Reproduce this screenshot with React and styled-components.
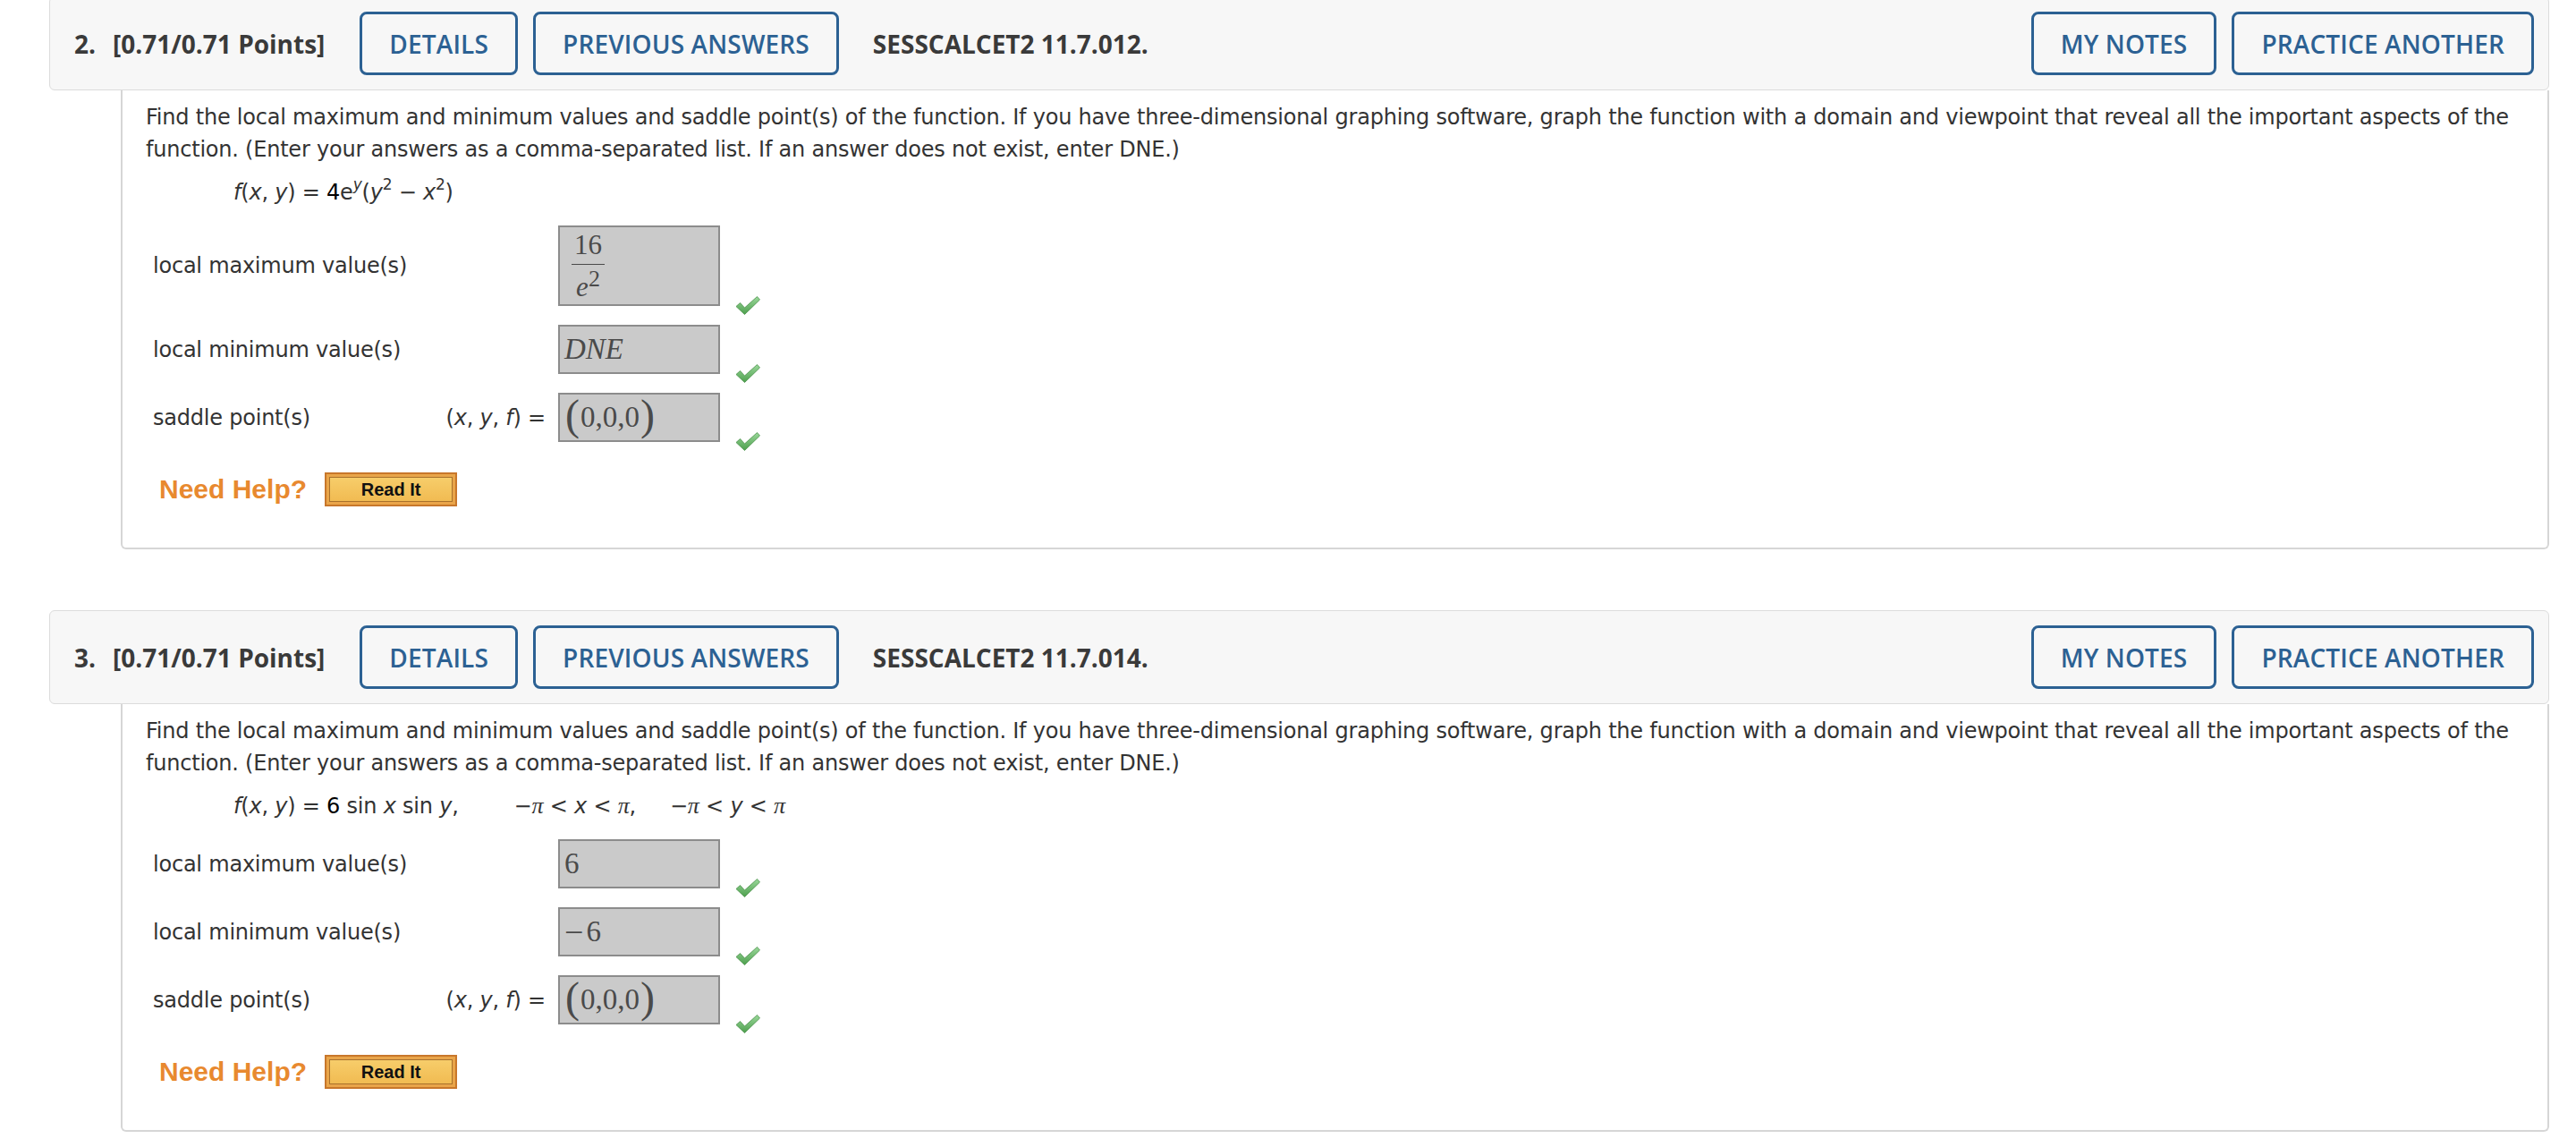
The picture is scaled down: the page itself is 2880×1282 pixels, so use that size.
import styled, { createGlobalStyle } from "styled-components";

const GlobalStyle = createGlobalStyle`
  body {
    margin: 0;
    background: #fff;
    font-family: "DejaVu Sans", Verdana, sans-serif;
    color: #333;
  }
`;

const Page = styled.div`
  margin-top: -4px;
  padding: 0 30px 0 55px;
`;

const Question = styled.section`
  & + & {
    margin-top: 68px;
  }
`;

const Header = styled.div`
  display: flex;
  align-items: center;
  height: 105px;
  box-sizing: border-box;
  padding: 0 16px 0 27px;
  background: #f7f7f7;
  border: 1px solid #dcdcdc;
  border-radius: 6px;
  font-family: "Open Sans", "Liberation Sans", sans-serif;
  font-size: 28px;
  font-weight: 700;
  color: #3a3a3a;
`;

const Num = styled.span`
  margin-right: 19px;
`;

const Points = styled.span`
  margin-right: 39px;
`;

const Code = styled.span`
  margin-left: 38px;
  flex: 1;
`;

const HeadButton = styled.button`
  height: 71px;
  box-sizing: border-box;
  padding: 0 30px;
  margin-left: ${(p) => (p.$first ? "0" : "17px")};
  border: 3px solid #2c6193;
  border-radius: 8px;
  background: transparent;
  color: #2c6193;
  font-family: "Open Sans", "Liberation Sans", sans-serif;
  font-size: 28px;
  font-weight: 600;
  letter-spacing: 0.15px;
  white-space: nowrap;
`;

const Body = styled.div`
  margin-left: 80px;
  border: 2px solid #d6d6d6;
  border-top: none;
  border-radius: 0 0 6px 6px;
  padding: 12px 28px 46px 26px;
  font-size: 24px;
  line-height: 36px;
  letter-spacing: -0.22px;
`;

const Prompt = styled.p`
  margin: 0;
`;

const Formula = styled.div`
  margin-top: 12px;
  padding-left: 98px;
  white-space: nowrap;

  i {
    font-style: italic;
  }
  sup {
    font-size: 17px;
    line-height: 0;
    vertical-align: 11px;
  }
`;

const Const = styled.span`
  color: #000;
`;

const Pi = styled.i`
  font-family: "Liberation Serif", serif;
  font-size: 26px;
`;

const Spacer = styled.span`
  display: inline-block;
  width: ${(p) => p.$w}px;
`;

const Rows = styled.div`
  margin: 19px 0 0 8px;
  display: flex;
  flex-direction: column;
  gap: 21px;
`;

const Row = styled.div`
  display: flex;
  align-items: center;
`;

const Label = styled.span`
  width: 320px;
  flex: none;
`;

const Prefix = styled.span`
  width: 133px;
  flex: none;
  box-sizing: border-box;
  padding-right: 14px;
  text-align: right;
  white-space: nowrap;
`;

const AnswerBox = styled.div`
  width: 181px;
  height: ${(p) => (p.$tall ? 90 : 55)}px;
  box-sizing: border-box;
  flex: none;
  display: flex;
  align-items: center;
  padding: 0 5px;
  background: #cacaca;
  border: 2px solid #8c8c8c;
  font-family: "Liberation Serif", "Times New Roman", serif;
  font-size: 33px;
  line-height: 1;
  letter-spacing: 0;
  color: #4a4a4a;
`;

const Frac = styled.span`
  display: inline-flex;
  flex-direction: column;
  align-items: center;
  margin-left: 8px;
  font-size: 31px;
`;

const FracTop = styled.span`
  padding: 0 3px 6px;
  border-bottom: 1.5px solid #4a4a4a;
`;

const FracBottom = styled.span`
  padding-top: 9px;
  i {
    font-style: italic;
  }
  sup {
    font-size: 26px;
    line-height: 0;
    vertical-align: 11px;
  }
`;

const Paren = styled.span`
  font-size: 48px;
  line-height: 1;
  position: relative;
  top: -3px;
  margin: 0 1px;
`;

const Minus = styled.span`
  margin-right: 3px;
  font-size: 38px;
`;

const CheckWrap = styled.span`
  align-self: flex-end;
  margin: 0 0 -11px 16px;
  display: flex;
`;

const HelpRow = styled.div`
  display: flex;
  align-items: center;
  margin: 34px 0 0 15px;
  letter-spacing: 0;
`;

const NeedHelp = styled.span`
  font-family: "Liberation Sans", Arial, sans-serif;
  font-weight: 700;
  font-size: 30px;
  color: #e8892f;
  margin-right: 20px;
`;

const ReadIt = styled.button`
  width: 148px;
  height: 38px;
  box-sizing: border-box;
  padding: 0;
  border: 2px solid #c8772b;
  background: #e9a54a;
  display: flex;

  span {
    flex: 1;
    margin: 3px;
    display: flex;
    align-items: center;
    justify-content: center;
    background: linear-gradient(#f7cd6a, #f1bb52);
    border: 1px solid #a8712c;
    font-family: "Liberation Sans", Arial, sans-serif;
    font-weight: 700;
    font-size: 20px;
    color: #111;
  }
`;

function Check() {
  return (
    <CheckWrap>
      <svg width="30" height="23" viewBox="0 0 30 23">
        <defs>
          <linearGradient id="chk" x1="0" y1="0" x2="0" y2="1">
            <stop offset="0" stopColor="#9ad89a" />
            <stop offset="1" stopColor="#4d9f4d" />
          </linearGradient>
        </defs>
        <path
          d="M2 12.5 L6.5 8.5 L11.5 14 L25.5 1.5 L28.5 5 L11.5 21.5 Z"
          fill="url(#chk)"
          stroke="#4a914a"
          strokeWidth="0.8"
          strokeLinejoin="round"
        />
      </svg>
    </CheckWrap>
  );
}

function QuestionHeader({ num, code }) {
  return (
    <Header>
      <Num>{num}.</Num>
      <Points>[0.71/0.71 Points]</Points>
      <HeadButton $first>DETAILS</HeadButton>
      <HeadButton>PREVIOUS ANSWERS</HeadButton>
      <Code>{code}</Code>
      <HeadButton $first>MY NOTES</HeadButton>
      <HeadButton>PRACTICE ANOTHER</HeadButton>
    </Header>
  );
}

const prompt =
  "Find the local maximum and minimum values and saddle point(s) of the function. If you have three-dimensional graphing software, graph the function with a domain and viewpoint that reveal all the important aspects of the function. (Enter your answers as a comma-separated list. If an answer does not exist, enter DNE.)";

function Saddle() {
  return (
    <AnswerBox>
      <Paren>(</Paren>0,0,0<Paren>)</Paren>
    </AnswerBox>
  );
}

function HelpLine() {
  return (
    <HelpRow>
      <NeedHelp>Need Help?</NeedHelp>
      <ReadIt>
        <span>Read It</span>
      </ReadIt>
    </HelpRow>
  );
}

export default function App() {
  return (
    <>
      <GlobalStyle />
      <Page>
        <Question>
          <QuestionHeader num={2} code="SESSCALCET2 11.7.012." />
          <Body>
            <Prompt>{prompt}</Prompt>
            <Formula>
              <i>f</i>(<i>x</i>, <i>y</i>) = <Const>4</Const>e<sup><i>y</i></sup>(<i>y</i>
              <sup>2</sup> − <i>x</i>
              <sup>2</sup>)
            </Formula>
            <Rows>
              <Row>
                <Label>local maximum value(s)</Label>
                <Prefix />
                <AnswerBox $tall>
                  <Frac>
                    <FracTop>16</FracTop>
                    <FracBottom>
                      <i>e</i>
                      <sup>2</sup>
                    </FracBottom>
                  </Frac>
                </AnswerBox>
                <Check />
              </Row>
              <Row>
                <Label>local minimum value(s)</Label>
                <Prefix />
                <AnswerBox>
                  <i>DNE</i>
                </AnswerBox>
                <Check />
              </Row>
              <Row>
                <Label>saddle point(s)</Label>
                <Prefix>
                  (<i>x</i>, <i>y</i>, <i>f</i>) =
                </Prefix>
                <Saddle />
                <Check />
              </Row>
            </Rows>
            <HelpLine />
          </Body>
        </Question>

        <Question>
          <QuestionHeader num={3} code="SESSCALCET2 11.7.014." />
          <Body>
            <Prompt>{prompt}</Prompt>
            <Formula>
              <i>f</i>(<i>x</i>, <i>y</i>) = <Const>6</Const> sin <i>x</i> sin <i>y</i>,
              <Spacer $w={62} />−<Pi>π</Pi> &lt; <i>x</i> &lt; <Pi>π</Pi>,
              <Spacer $w={38} />−<Pi>π</Pi> &lt; <i>y</i> &lt; <Pi>π</Pi>
            </Formula>
            <Rows>
              <Row>
                <Label>local maximum value(s)</Label>
                <Prefix />
                <AnswerBox>6</AnswerBox>
                <Check />
              </Row>
              <Row>
                <Label>local minimum value(s)</Label>
                <Prefix />
                <AnswerBox>
                  <Minus>−</Minus>6
                </AnswerBox>
                <Check />
              </Row>
              <Row>
                <Label>saddle point(s)</Label>
                <Prefix>
                  (<i>x</i>, <i>y</i>, <i>f</i>) =
                </Prefix>
                <Saddle />
                <Check />
              </Row>
            </Rows>
            <HelpLine />
          </Body>
        </Question>
      </Page>
    </>
  );
}
